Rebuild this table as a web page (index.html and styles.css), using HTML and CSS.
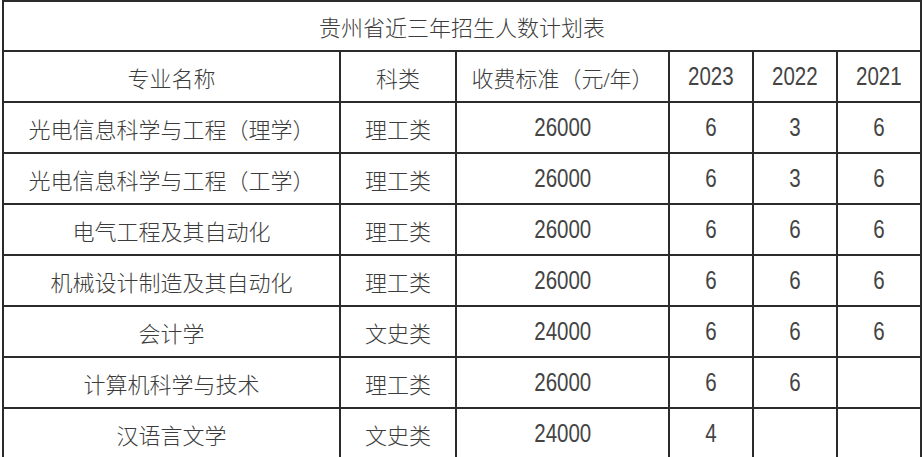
FILE: index.html
```html
<!DOCTYPE html>
<html lang="zh-CN">
<head>
<meta charset="utf-8">
<title>贵州省近三年招生人数计划表</title>
<link rel="stylesheet" href="styles.css">
</head>
<body>
<table class="plan">
  <colgroup>
    <col class="c-major">
    <col class="c-type">
    <col class="c-fee">
    <col class="c-year">
    <col class="c-year">
    <col class="c-year">
  </colgroup>
  <tr class="title-row"><td colspan="6">贵州省近三年招生人数计划表</td></tr>
  <tr><td>专业名称</td><td>科类</td><td>收费标准（元/年）</td><td><span class="num">2023</span></td><td><span class="num">2022</span></td><td><span class="num">2021</span></td></tr>
  <tr><td>光电信息科学与工程（理学）</td><td>理工类</td><td><span class="num">26000</span></td><td><span class="num">6</span></td><td><span class="num">3</span></td><td><span class="num">6</span></td></tr>
  <tr><td>光电信息科学与工程（工学）</td><td>理工类</td><td><span class="num">26000</span></td><td><span class="num">6</span></td><td><span class="num">3</span></td><td><span class="num">6</span></td></tr>
  <tr><td>电气工程及其自动化</td><td>理工类</td><td><span class="num">26000</span></td><td><span class="num">6</span></td><td><span class="num">6</span></td><td><span class="num">6</span></td></tr>
  <tr><td>机械设计制造及其自动化</td><td>理工类</td><td><span class="num">26000</span></td><td><span class="num">6</span></td><td><span class="num">6</span></td><td><span class="num">6</span></td></tr>
  <tr><td>会计学</td><td>文史类</td><td><span class="num">24000</span></td><td><span class="num">6</span></td><td><span class="num">6</span></td><td><span class="num">6</span></td></tr>
  <tr><td>计算机科学与技术</td><td>理工类</td><td><span class="num">26000</span></td><td><span class="num">6</span></td><td><span class="num">6</span></td><td></td></tr>
  <tr><td>汉语言文学</td><td>文史类</td><td><span class="num">24000</span></td><td><span class="num">4</span></td><td></td><td></td></tr>
</table>
</body>
</html>
```
FILE: styles.css
```css
html, body {
  margin: 0;
  padding: 0;
  background: #fff;
  overflow: hidden;
}
body {
  padding-left: 2px;
}
.plan {
  border-collapse: collapse;
  table-layout: fixed;
  width: 919px;
  font-family: "Liberation Serif", "Noto Sans CJK SC", serif;
  font-size: 22px;
  font-weight: 300;
  color: #3c3c3c;
}
.c-major { width: 337px; }
.c-type { width: 116px; }
.c-fee { width: 213px; }
.c-year { width: 84px; }
.plan td {
  border: 2px solid #2b2b2b;
  height: 49px;
  padding: 0;
  text-align: center;
  vertical-align: middle;
  white-space: nowrap;
  overflow: hidden;
}
.num {
  display: inline-block;
  font-family: "Liberation Sans", sans-serif;
  font-size: 25px;
  font-weight: 400;
  color: #444;
  transform: scaleX(0.82);
}
.plan .title-row td {
  height: 48px;
}
```
